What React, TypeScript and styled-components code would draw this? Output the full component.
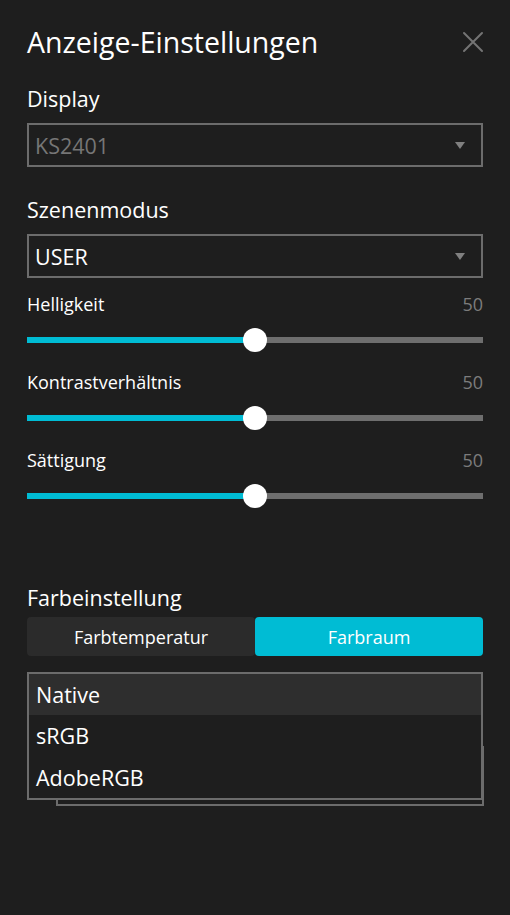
import React from "react";
import styled, { createGlobalStyle } from "styled-components";

const GlobalStyle = createGlobalStyle`
  html, body {
    margin: 0;
    padding: 0;
    background: #1e1e1e;
  }
  body {
    font-family: "Open Sans", "Noto Sans", "Liberation Sans", sans-serif;
    color: #ffffff;
  }
`;

const colors = {
  bg: "#1e1e1e",
  border: "#6c6c6c",
  cyan: "#00bcd4",
  track: "#6e6e6e",
  muted: "#7c7c7c",
  tab: "#2b2b2b",
  hover: "#2e2e2e",
};

type SliderItem = { label: string; value: number };

const sliders: SliderItem[] = [
  { label: "Helligkeit", value: 50 },
  { label: "Kontrastverhältnis", value: 50 },
  { label: "Sättigung", value: 50 },
];

const colorSpaces = ["Native", "sRGB", "AdobeRGB"];

export default function App() {
  return (
    <>
      <GlobalStyle />
      <Panel>
        <Header>
          <Title>Anzeige-Einstellungen</Title>
          <CloseButton aria-label="close">
            <svg width="22" height="22" viewBox="0 0 22 22">
              <path
                d="M2 2 L20 20 M20 2 L2 20"
                stroke="#747474"
                strokeWidth="2"
                strokeLinecap="round"
              />
            </svg>
          </CloseButton>
        </Header>

        <Label>Display</Label>
        <Select>
          <SelectText $disabled>KS2401</SelectText>
          <Caret />
        </Select>

        <Label $top={29}>Szenenmodus</Label>
        <Select>
          <SelectText>USER</SelectText>
          <Caret />
        </Select>

        <Sliders>
          {sliders.map((s) => (
            <SliderBlock key={s.label}>
              <SliderHead>
                <SliderLabel>{s.label}</SliderLabel>
                <SliderValue>{s.value}</SliderValue>
              </SliderHead>
              <Track>
                <Fill style={{ width: `${s.value}%` }} />
                <Thumb style={{ left: `${s.value}%` }} />
              </Track>
            </SliderBlock>
          ))}
        </Sliders>

        <Label $top={85} $bottom={5}>
          Farbeinstellung
        </Label>
        <Tabs>
          <Tab>Farbtemperatur</Tab>
          <Tab $active>Farbraum</Tab>
        </Tabs>

        <DropdownArea>
          <BehindSelect />
          <List>
            {colorSpaces.map((c, i) => (
              <ListItem key={c} $highlight={i === 0}>
                {c}
              </ListItem>
            ))}
          </List>
        </DropdownArea>
      </Panel>
    </>
  );
}

const Panel = styled.div`
  width: 510px;
  min-height: 915px;
  box-sizing: border-box;
  padding: 22px 27px 0 27px;
  background: ${colors.bg};
  display: flex;
  flex-direction: column;
`;

const Header = styled.div`
  display: flex;
  align-items: center;
  justify-content: space-between;
  height: 40px;
  margin-bottom: 23px;
`;

const Title = styled.h1`
  margin: 0;
  font-size: 28.5px;
  line-height: 40px;
  font-weight: 400;
  color: #ffffff;
`;

const CloseButton = styled.button`
  background: none;
  border: none;
  padding: 0;
  margin-right: -1px;
  width: 22px;
  height: 22px;
  display: flex;
  cursor: pointer;
`;

const Label = styled.div<{ $top?: number; $bottom?: number }>`
  font-size: 21.5px;
  line-height: 28px;
  margin-top: ${({ $top }) => ($top ?? 0) + "px"};
  margin-bottom: ${({ $bottom }) => ($bottom ?? 10) + "px"};
  color: #ffffff;
`;

const Select = styled.div`
  height: 44px;
  box-sizing: border-box;
  border: 2px solid ${colors.border};
  display: flex;
  align-items: center;
  justify-content: space-between;
  padding: 0 16px 0 6px;
`;

const SelectText = styled.span<{ $disabled?: boolean }>`
  font-size: 21.5px;
  color: ${({ $disabled }) => ($disabled ? "#767676" : "#ffffff")};
`;

const Caret = styled.span`
  width: 0;
  height: 0;
  border-left: 5px solid transparent;
  border-right: 5px solid transparent;
  border-top: 7px solid #808080;
`;

const Sliders = styled.div`
  display: flex;
  flex-direction: column;
  gap: 27px;
  margin-top: 14px;
`;

const SliderBlock = styled.div`
  display: flex;
  flex-direction: column;
`;

const SliderHead = styled.div`
  display: flex;
  justify-content: space-between;
  align-items: center;
  height: 24px;
  margin-bottom: 21px;
`;

const SliderLabel = styled.span`
  font-size: 18px;
  color: #ffffff;
`;

const SliderValue = styled.span`
  font-size: 18px;
  color: ${colors.muted};
`;

const Track = styled.div`
  position: relative;
  height: 6px;
  background: ${colors.track};
`;

const Fill = styled.div`
  height: 100%;
  background: ${colors.cyan};
`;

const Thumb = styled.div`
  position: absolute;
  top: 50%;
  width: 24px;
  height: 24px;
  border-radius: 50%;
  background: #ffffff;
  transform: translate(-50%, -50%);
`;

const Tabs = styled.div`
  display: grid;
  grid-template-columns: 1fr 1fr;
  height: 39px;
`;

const Tab = styled.div<{ $active?: boolean }>`
  display: flex;
  align-items: center;
  justify-content: center;
  font-size: 18px;
  color: #ffffff;
  border-radius: 4px;
  background: ${({ $active }) => ($active ? colors.cyan : colors.tab)};
`;

const DropdownArea = styled.div`
  position: relative;
  margin-top: 16px;
  height: 134px;
`;

const BehindSelect = styled.div`
  position: absolute;
  left: 29px;
  right: -1px;
  bottom: 0;
  height: 60px;
  border: 2px solid ${colors.border};
  border-top: none;
  box-sizing: border-box;
`;

const List = styled.div`
  position: relative;
  border: 2px solid ${colors.border};
  background: ${colors.bg};
  display: flex;
  flex-direction: column;
`;

const ListItem = styled.div<{ $highlight?: boolean }>`
  height: 41.3px;
  display: flex;
  align-items: center;
  padding-left: 7px;
  font-size: 21.5px;
  color: #ffffff;
  background: ${({ $highlight }) => ($highlight ? colors.hover : "transparent")};
`;
